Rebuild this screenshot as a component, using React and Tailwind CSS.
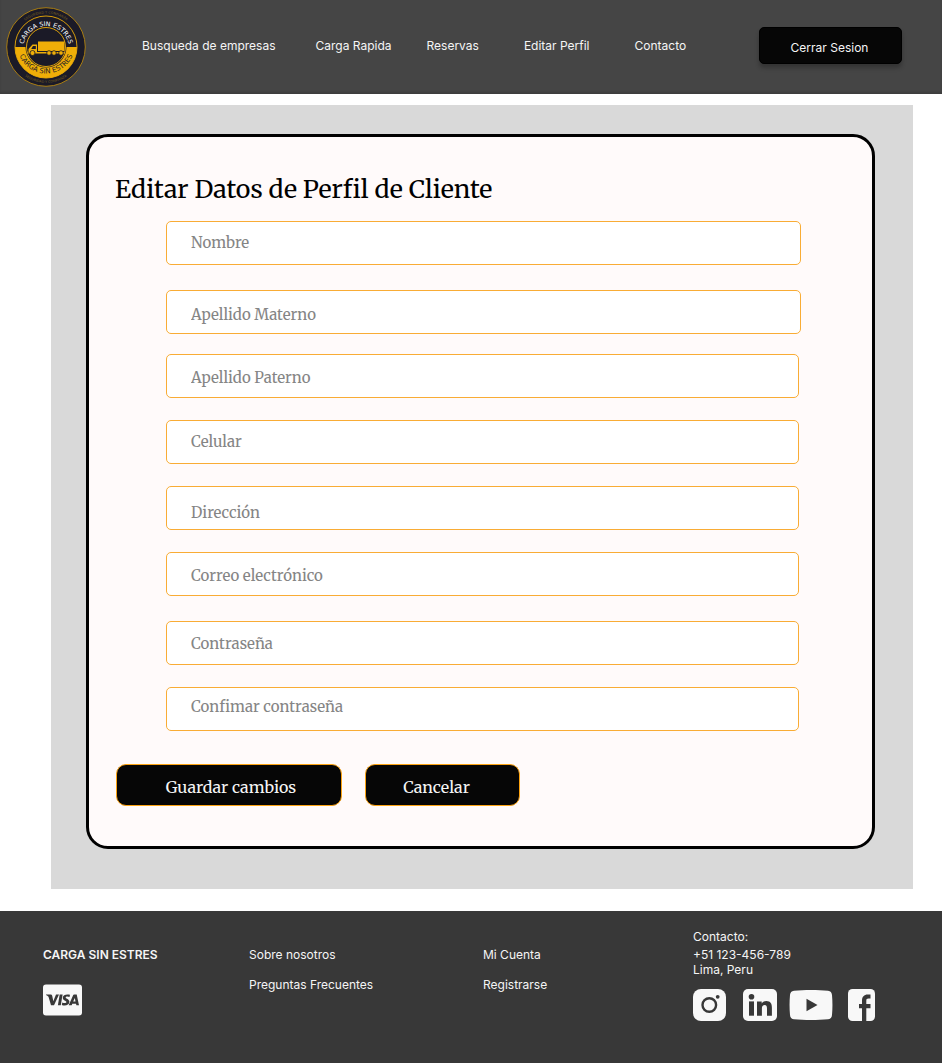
import React from "react";

const serif = "font-['Merriweather','DejaVu_Serif_Condensed','DejaVu_Serif',serif]";

const navLinks = [
  { label: "Busqueda de empresas", space: "mr-10" },
  { label: "Carga Rapida", space: "mr-[35px]" },
  { label: "Reservas", space: "mr-[45px]" },
  { label: "Editar Perfil", space: "mr-[45px]" },
  { label: "Contacto", space: "" },
];

const fields = [
  { id: "nombre", label: "Nombre", type: "text", row: "mr-[71px]", text: "pb-0.5" },
  { id: "materno", label: "Apellido Materno", type: "text", row: "mr-[71px] mt-[25px]", text: "pt-1" },
  { id: "paterno", label: "Apellido Paterno", type: "text", row: "mr-[73px] mt-5", text: "pt-0.5" },
  { id: "celular", label: "Celular", type: "tel", row: "mr-[73px] mt-[22px]", text: "pb-0.5" },
  { id: "direccion", label: "Dirección", type: "text", row: "mr-[73px] mt-[22px]", text: "pt-2" },
  { id: "correo", label: "Correo electrónico", type: "email", row: "mr-[73px] mt-[22px]", text: "pt-0.5" },
  { id: "clave", label: "Contraseña", type: "password", row: "mr-[73px] mt-[25px]", text: "" },
  { id: "clave2", label: "Confimar contraseña", type: "password", row: "mr-[73px] mt-[22px]", text: "pb-1.5" },
];

function Truck() {
  return (
    <g fill="#efae08">
      <path d="M38 41.5h26.500v9.500H38z" />
      <path d="M32.500 44.500H37v7.500h27.500v1.500H28.500v-4.500z" />
      <path d="M33 46h2.800v3h-4.600z" fill="#1b1a27" />
      <g stroke="#1b1a27" strokeWidth="0.8">
        <circle cx="32.500" cy="53" r="2.500" />
        <circle cx="49" cy="53" r="2.300" />
        <circle cx="54" cy="53" r="2.300" />
        <circle cx="61" cy="53" r="2.300" />
      </g>
    </g>
  );
}

function Logo() {
  return (
    <svg className="h-20 w-20" viewBox="6 7 80 80" role="img" aria-label="Carga sin estres">
      <defs>
        <path id="arcTop" d="M23 49a23 23 0 1 1 46 0" />
        <path id="arcBottom" d="M17.500 45a28.500 28.500 0 1 0 57 0" />
        <path id="rimTop" d="M12.500 47a33.500 33.500 0 0 1 67 0" />
        <path id="rimBottom" d="M10 47a36 36 0 0 0 72 0" />
      </defs>
      <circle cx="46" cy="47" r="39.3" fill="#1b1a27" stroke="#a77c12" strokeWidth="1" />
      <circle cx="46" cy="47" r="31" fill="#1b1a27" stroke="#d79d0b" strokeWidth="1" />
      <path d="M15 47h62a31 31 0 0 1-62 0z" fill="#efae08" />
      <circle cx="46" cy="47" r="20.5" fill="#1b1a27" />
      <circle cx="46" cy="47" r="19.5" fill="none" stroke="#efae08" strokeWidth="0.9" />
      <Truck />
      <g fontFamily="DejaVu Sans, sans-serif" textAnchor="middle">
        <text fontSize="6.4" fill="#ffffff">
          <textPath href="#arcTop" startOffset="50%">CARGA SIN ESTRES</textPath>
        </text>
        <text fontSize="7" fill="#1b1a27">
          <textPath href="#arcBottom" startOffset="50%">CARGA SIN ESTRES</textPath>
        </text>
        <text fontSize="3.400" fill="#79601f">
          <textPath href="#rimTop" startOffset="50%">SEGURIDAD Y CONFIANZA</textPath>
        </text>
        <text fontSize="3.400" fill="#79601f">
          <textPath href="#rimBottom" startOffset="50%">SEGURIDAD Y CONFIANZA</textPath>
        </text>
      </g>
    </svg>
  );
}

function Visa() {
  return (
    <svg className="h-8 w-10" viewBox="0 0 40 32" role="img" aria-label="Visa">
      <rect x="0" y="0.5" width="39" height="31" rx="3" fill="#f8f8f8" />
      <g fill="#383838">
        <path d="M3 10.5h4.7c.8 0 1.3.4 1.5 1.2l1.1 5.5 2.7-6.7h3L11 21.3H8L5.500 12.8C4.900 12 4 11.400 3 11z" />
        <path d="M16.700 10.500h2.900l-1.800 10.800h-2.900z" />
        <path d="M27 10.800l-.5 2.300c-1.500-.7-3.800-.7-3.800.4 0 1.300 3.700 1.500 3.700 4.300 0 3.600-4.600 4.300-7.600 3.100l.5-2.400c1.500.8 4.100.9 4.100-.4 0-1.400-3.600-1.500-3.600-4.300 0-3.300 4.300-4 7.200-3z" />
        <path fillRule="evenodd" d="M31.200 10.500h2.500L36 21.300h-2.600l-.4-1.600h-3.700l-.6 1.600h-3l4.300-9.900c.2-.6.600-.9 1.200-.9zm.6 3.500l-1.600 3.600h2.300z" />
      </g>
    </svg>
  );
}

function Instagram() {
  return (
    <svg className="h-8 w-[33px]" viewBox="0 0 33 32" aria-hidden="true">
      <rect width="33" height="32" rx="8" fill="#f8f8f8" />
      <circle cx="16.300" cy="16" r="6.800" fill="none" stroke="#383838" strokeWidth="2.400" />
      <circle cx="24.700" cy="7.800" r="1.900" fill="#383838" />
    </svg>
  );
}

function LinkedIn() {
  return (
    <svg className="h-8 w-[34px]" viewBox="0 0 34 32" aria-hidden="true">
      <rect width="34" height="32" rx="5" fill="#f8f8f8" />
      <g fill="#383838">
        <circle cx="8.500" cy="7.700" r="2.800" />
        <path d="M6 12.400h5v14.300H6z" />
        <path d="M14 12.400h4.700v2c.9-1.500 2.500-2.400 4.600-2.400 4.300 0 5.600 2.800 5.600 6.700v8h-4.900v-7.200c0-1.900-.4-3.600-2.400-3.600-2 0-2.700 1.600-2.700 3.500v7.300H14z" />
      </g>
    </svg>
  );
}

function YouTube() {
  return (
    <svg className="h-8 w-11" viewBox="0 0 44 32" aria-hidden="true">
      <path d="M5 1.700C15 .8 29 .8 39 1.700c2.600.3 3.800 1.800 4 4.400.6 6.600.6 13.200 0 19.800-.2 2.600-1.400 4.100-4 4.400-10 .9-24 .9-34 0-2.600-.3-3.800-1.800-4-4.400C.4 19.300.4 12.700 1 6.100c.2-2.600 1.400-4.100 4-4.400z" fill="#f8f8f8" />
      <path d="M17.500 9.800v12.400L28.500 16z" fill="#383838" />
    </svg>
  );
}

function Facebook() {
  return (
    <svg className="h-8 w-[27px]" viewBox="0 0 27 32" aria-hidden="true">
      <rect width="27" height="32" rx="4.500" fill="#f8f8f8" />
      <path d="M14 32V19.200h-3v-4.200h3v-3.300c0-3.900 2-6.200 5.800-6.200H22.500v4h-2c-1.700 0-2.200.8-2.200 2.400V15h4.200v4.200h-4.200V32z" fill="#383838" />
    </svg>
  );
}

export default function App() {
  return (
    <div className="min-h-screen bg-white font-['Inter',sans-serif] text-xs text-[#f5f5f5]">
      <header className="flex h-[94px] items-center bg-[#454545] pl-1.5 pr-10 shadow-[inset_0_-2px_2px_rgba(0,0,0,0.12)]">
        <a href="#inicio" className="mr-14 shrink-0">
          <Logo />
        </a>
        <nav className="mb-0.5 flex items-center whitespace-nowrap">
          {navLinks.map((item) => (
            <a key={item.label} href="#" className={item.space}>
              {item.label}
            </a>
          ))}
        </nav>
        <button
          type="button"
          className="mb-1 ml-auto h-[37px] w-[143px] shrink-0 rounded-[5px] border border-black bg-[#060606] pr-0.5 pt-1.5 shadow-[0_4px_4px_rgba(0,0,0,0.25)]"
        >
          Cerrar Sesion
        </button>
      </header>

      <main className="ml-[51px] mr-[29px] mt-[11px] bg-[#d9d9d9] pb-10 pl-[35px] pr-[38px] pt-[29px]">
        <form className={`rounded-[22px] border-[3px] border-black bg-[#fffafa] pb-10 pl-[26px] pt-9 ${serif}`}>
          <h1 className="mb-4 text-[25px] leading-8 text-black">Editar Datos de Perfil de Cliente</h1>
          <div className="pl-[51px]">
            {fields.map((field) => (
              <div key={field.id} className={field.row}>
                <input
                  id={field.id}
                  type={field.type}
                  aria-label={field.label}
                  placeholder={field.label}
                  className={`block h-11 w-full rounded-[5px] border border-[#f9ac35] bg-white pl-6 text-[15px] text-black placeholder:text-[#858585] ${field.text}`}
                />
              </div>
            ))}
          </div>
          <div className="ml-px mt-[33px] flex gap-[23px] text-base">
            <button type="submit" className="h-[42px] w-[226px] rounded-[10px] border border-[#fca311] bg-[#060606] pl-1 pt-1">
              Guardar cambios
            </button>
            <button type="button" className="h-[42px] w-[155px] rounded-[10px] border border-[#fca311] bg-[#060606] pr-3 pt-1">
              Cancelar
            </button>
          </div>
        </form>
      </main>

      <footer className="mt-[22px] flex h-[152px] items-start bg-[#383838] pl-[43px] pr-[66px] pt-[18px]">
        <div className="w-[206px] pt-[18px]">
          <p className="mb-[21px] font-semibold">CARGA SIN ESTRES</p>
          <Visa />
        </div>
        <div className="flex w-[234px] flex-col items-start gap-[14px] pt-[18px]">
          <a href="#">Sobre nosotros</a>
          <a href="#">Preguntas Frecuentes</a>
        </div>
        <div className="flex flex-col items-start gap-[14px] pt-[18px]">
          <a href="#">Mi Cuenta</a>
          <a href="#">Registrarse</a>
        </div>
        <address className="ml-auto w-[183px] not-italic">
          <p className="mb-0.5">Contacto:</p>
          <p className="leading-[15px]">+51 123-456-789</p>
          <p className="leading-[15px]">Lima, Peru</p>
          <div className="mt-3 flex items-center">
            <a href="#" aria-label="Instagram" className="mr-[17px]"><Instagram /></a>
            <a href="#" aria-label="LinkedIn" className="mr-3"><LinkedIn /></a>
            <a href="#" aria-label="YouTube" className="mr-[15px]"><YouTube /></a>
            <a href="#" aria-label="Facebook"><Facebook /></a>
          </div>
        </address>
      </footer>
    </div>
  );
}
